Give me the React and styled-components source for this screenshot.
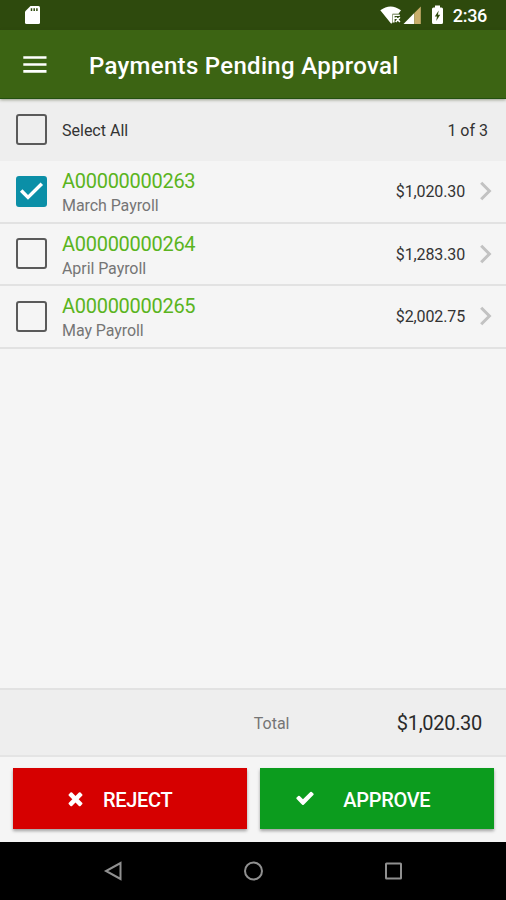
import React from "react";
import styled, { createGlobalStyle } from "styled-components";

const GlobalStyle = createGlobalStyle`
  * { box-sizing: border-box; }
  body { margin: 0; background: #f5f5f5; }
  svg { display: block; flex: none; }
  button { font: inherit; border: 0; padding: 0; background: none; }
`;

const Screen = styled.div`
  width: 506px;
  height: 900px;
  display: flex;
  flex-direction: column;
  overflow: hidden;
  background: #f5f5f5;
  font-family: Roboto, "Liberation Sans", sans-serif;
  color: #333;
`;

const StatusBar = styled.div`
  flex: none;
  height: 30px;
  display: flex;
  align-items: center;
  justify-content: space-between;
  padding: 0 19px 0 24px;
  background: #2e4a0d;
`;

const StatusIcons = styled.div`
  display: flex;
  align-items: center;
`;

const Clock = styled.span`
  margin-left: 8.5px;
  padding-top: 2px;
  color: #fff;
  font-size: 18px;
  font-weight: 500;
  line-height: 24px;
  letter-spacing: -0.3px;
`;

const AppBar = styled.header`
  flex: none;
  height: 69px;
  display: flex;
  align-items: center;
  padding: 1px 23px 0;
  background: #3c6413;
  border-bottom: 1px solid #23500f;
  box-shadow: 0 1px 3px rgba(50, 60, 20, 0.45);
  z-index: 1;
`;

const Title = styled.h1`
  margin: 2px 0 0 42px;
  color: #fff;
  font-size: 24px;
  font-weight: 500;
  line-height: 32px;
  letter-spacing: 0.3px;
  white-space: nowrap;
`;

const SelectAllRow = styled.div`
  flex: none;
  height: 62px;
  display: flex;
  align-items: center;
  padding: 0 18px 1px 16px;
  background: #eeeeee;
  font-size: 16px;
`;

const SelectLabel = styled.span`
  padding-top: 2px;
`;

const Count = styled.span`
  margin-left: auto;
  padding-top: 2px;
`;

const Checkbox = styled.span`
  flex: none;
  width: 31px;
  height: 31px;
  margin-right: 15px;
  display: flex;
  align-items: center;
  justify-content: center;
  border: 2px solid ${(p) => (p.$checked ? "#0b8fa7" : "#5a5a5a")};
  border-radius: 3px;
  background: ${(p) => (p.$checked ? "#0b8fa7" : "transparent")};
`;

const List = styled.main`
  flex: 1;
  min-height: 0;
`;

const Row = styled.div`
  height: 62.6px;
  display: flex;
  align-items: center;
  padding: 0 14px 0 16px;
  border-bottom: 2px solid #e2e2e2;
`;

const Details = styled.div`
  flex: 1;
  padding-top: 4px;
`;

const Account = styled.div`
  color: #5ab420;
  font-size: 20px;
  line-height: 25px;
  letter-spacing: -0.28px;
`;

const Description = styled.div`
  color: #757575;
  font-size: 16px;
  line-height: 23px;
  letter-spacing: -0.07px;
`;

const Amount = styled.span`
  margin-right: 14px;
  padding-top: 1px;
  font-size: 16px;
  letter-spacing: -0.12px;
`;

const TotalBar = styled.div`
  flex: none;
  height: 69px;
  display: flex;
  align-items: center;
  justify-content: flex-end;
  padding: 1px 24px 0 0;
  background: #eeeeee;
  border-top: 2px solid #e2e2e2;
  border-bottom: 2px solid #e4e4e4;
`;

const TotalLabel = styled.span`
  color: #757575;
  font-size: 16px;
`;

const TotalAmount = styled.span`
  width: 192.5px;
  text-align: right;
  font-size: 20px;
  letter-spacing: -0.3px;
  color: #2a2a2a;
`;

const Actions = styled.div`
  flex: none;
  height: 85px;
  display: grid;
  grid-template-columns: 1fr 1fr;
  gap: 12.6px;
  padding: 11px 11.6px 13.5px 12.6px;
`;

const ActionButton = styled.button`
  display: flex;
  align-items: center;
  padding: 0 0 0 ${(p) => p.$inset}px;
  gap: ${(p) => p.$gap}px;
  background: ${(p) => p.$color};
  color: #fff;
  font-size: 20px;
  font-weight: 500;
  letter-spacing: -0.3px;
  box-shadow: 0 2px 3px rgba(0, 0, 0, 0.35);
`;

const ActionLabel = styled.span`
  padding-top: 3px;
`;

const NavBar = styled.nav`
  flex: none;
  height: 58px;
  display: grid;
  grid-template-columns: repeat(3, 140px);
  justify-content: center;
  align-items: center;
  justify-items: center;
  background: #000;
`;

const SdCard = () => (
  <svg width="18" height="20" viewBox="0 0 18 20">
    <path d="M6.5 1H14.5Q16 1 16 2.5V17.5Q16 19 14.5 19H2.5Q1 19 1 17.5V6.5Z" fill="#fff" />
    <path d="M7.5 3.3v2.6M10.2 3.3v2.6M12.9 3.3v2.6" stroke="#2e4a0d" strokeWidth="1.5" />
  </svg>
);

const Wifi = () => (
  <svg width="23" height="20" viewBox="0 0 23 20">
    <path d="M0.3 5.2Q10.5 -2.4 21 5.2L18.5 8.8H12.5V17.5L11.2 18.8Z" fill="#fff" />
    <path d="M13.8 9.5v8M13.8 10.2h6M13.8 13.2h2.5M15.7 12.2l4.2 4.8M19.9 12.2l-4.2 4.8" stroke="#fff" strokeWidth="1.6" />
  </svg>
);

const Signal = () => (
  <svg width="18" height="18" viewBox="0 0 18 18">
    <path d="M0.5 18L11.3 7V18Z" fill="#fff" />
    <path d="M11.3 7L17.8 0.5V18H11.3Z" fill="#c9ae6b" />
  </svg>
);

const Battery = () => (
  <svg width="13" height="20" viewBox="0 0 13 20">
    <path d="M4 0.5H9V2.5H10.5Q12 2.5 12 4V17.5Q12 19 10.5 19H2.5Q1 19 1 17.5V4Q1 2.5 2.5 2.5H4Z" fill="#fff" />
    <path d="M7.7 5.5L3.8 11.5H6L5.2 16L9.2 9.8H6.9Z" fill="#2e4a0d" />
  </svg>
);

const Menu = () => (
  <svg width="24" height="18" viewBox="0 0 24 18">
    <path d="M0.3 1.5H23.5M0.3 8.5H23.5M0.3 15.3H23.5" stroke="#fff" strokeWidth="2.7" />
  </svg>
);

const Tick = () => (
  <svg width="25" height="19" viewBox="0 0 25 19">
    <path d="M2.2 8.6L9 15.4L22.8 1.8" fill="none" stroke="#fff" strokeWidth="3.5" />
  </svg>
);

const Chevron = () => (
  <svg width="13" height="20" viewBox="0 0 13 20">
    <path d="M2.2 1.8L10.4 10L2.2 18.2" fill="none" stroke="#c2c2c2" strokeWidth="3" />
  </svg>
);

const Cross = () => (
  <svg width="21" height="21" viewBox="0 0 1792 1792">
    <path fill="#fff" d="M1490 1322q0 40-28 68l-136 136q-28 28-68 28t-68-28l-294-294-294 294q-28 28-68 28t-68-28l-136-136q-28-28-28-68t28-68l294-294-294-294q-28-28-28-68t28-68l136-136q28-28 68-28t68 28l294 294 294-294q28-28 68-28t68 28l136 136q28 28 28 68t-28 68l-294 294 294 294q28 28 28 68z" />
  </svg>
);

const CheckMark = () => (
  <svg width="20" height="20" viewBox="0 0 1792 1792">
    <path fill="#fff" d="M1671 566q0 40-28 68l-724 724-136 136q-28 28-68 28t-68-28l-136-136-362-362q-28-28-28-68t28-68l136-136q28-28 68-28t68 28l294 295 656-657q28-28 68-28t68 28l136 136q28 28 28 68z" />
  </svg>
);

const payments = [
  { id: "A00000000263", name: "March Payroll", amount: "$1,020.30", checked: true },
  { id: "A00000000264", name: "April Payroll", amount: "$1,283.30", checked: false },
  { id: "A00000000265", name: "May Payroll", amount: "$2,002.75", checked: false },
];

const BatterySlot = styled.span`
  margin-left: 10px;
`;

export default function App() {
  return (
    <Screen>
      <GlobalStyle />
      <StatusBar>
        <SdCard />
        <StatusIcons>
          <Wifi />
          <Signal />
          <BatterySlot><Battery /></BatterySlot>
          <Clock>2:36</Clock>
        </StatusIcons>
      </StatusBar>
      <AppBar>
        <Menu />
        <Title>Payments Pending Approval</Title>
      </AppBar>
      <SelectAllRow>
        <Checkbox />
        <SelectLabel>Select All</SelectLabel>
        <Count>1 of 3</Count>
      </SelectAllRow>
      <List>
        {payments.map((p) => (
          <Row key={p.id}>
            <Checkbox $checked={p.checked}>{p.checked && <Tick />}</Checkbox>
            <Details>
              <Account>{p.id}</Account>
              <Description>{p.name}</Description>
            </Details>
            <Amount>{p.amount}</Amount>
            <Chevron />
          </Row>
        ))}
      </List>
      <TotalBar>
        <TotalLabel>Total</TotalLabel>
        <TotalAmount>$1,020.30</TotalAmount>
      </TotalBar>
      <Actions>
        <ActionButton $color="#d60000" $inset={52.4} $gap={17}>
          <Cross />
          <ActionLabel>REJECT</ActionLabel>
        </ActionButton>
        <ActionButton $color="#0c9c1e" $inset={35} $gap={28.5}>
          <CheckMark />
          <ActionLabel>APPROVE</ActionLabel>
        </ActionButton>
      </Actions>
      <NavBar>
        <svg width="20" height="20" viewBox="0 0 20 20">
          <path d="M17.5 2V18L3 10Z" fill="none" stroke="#909090" strokeWidth="2" />
        </svg>
        <svg width="20" height="20" viewBox="0 0 20 20">
          <circle cx="10.5" cy="10" r="8.5" fill="none" stroke="#909090" strokeWidth="2" />
        </svg>
        <svg width="20" height="20" viewBox="0 0 20 20">
          <rect x="3" y="2.5" width="15" height="15" rx="0.5" fill="none" stroke="#909090" strokeWidth="2" />
        </svg>
      </NavBar>
    </Screen>
  );
}
